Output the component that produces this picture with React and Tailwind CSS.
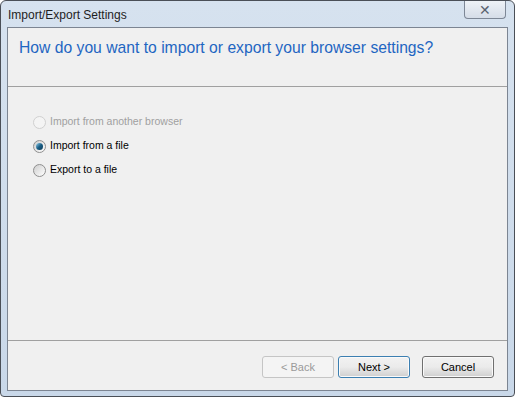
import { useState } from 'react'

function Radio({ checked, disabled, label, onClick }) {
  return (
    <button
      type="button"
      onClick={onClick}
      disabled={disabled}
      className={`flex items-center h-[24px] text-[10.5px] ${disabled ? 'text-[#a0a0a0]' : 'text-black'}`}
    >
      <span
        className={`w-[13px] h-[13px] rounded-full border flex items-center justify-center mr-[4px] ${
          disabled
            ? 'border-[#d0d0d0] bg-[#f4f4f4]'
            : 'border-[#8f8f8f] bg-gradient-to-br from-[#cfcfcf] to-[#ffffff]'
        }`}
      >
        {checked && (
          <span className="w-[7px] h-[7px] rounded-full bg-gradient-to-br from-[#8fd3f0] via-[#1a5f86] to-[#0d3b59]" />
        )}
      </span>
      {label}
    </button>
  )
}

function DlgButton({ children, disabled, isDefault }) {
  return (
    <button
      type="button"
      disabled={disabled}
      className={`w-[72px] h-[22px] rounded-[3px] border text-[11px] ${
        disabled
          ? 'border-[#c5c5c5] bg-[#f4f4f4] text-[#9a9a9a]'
          : isDefault
          ? 'border-[#3c7fb1] bg-gradient-to-b from-[#f2f2f2] via-[#ebebeb] to-[#cfcfcf] text-black shadow-[inset_0_0_0_1px_#fafafa]'
          : 'border-[#707070] bg-gradient-to-b from-[#f2f2f2] via-[#ebebeb] to-[#cfcfcf] text-black shadow-[inset_0_0_0_1px_#fafafa]'
      }`}
    >
      {children}
    </button>
  )
}

export default function App() {
  const [choice, setChoice] = useState('file')

  return (
    <div className="w-[515px] h-[397px] font-['Liberation_Sans',Arial,sans-serif]">
      <div className="w-[515px] h-[397px] flex flex-col rounded-t-[6px] rounded-b-[4px] border border-[#4a4f57] bg-gradient-to-b from-[#d6e2ef] to-[#c9d8e9]">
        {/* title bar */}
        <div className="h-[26px] flex items-start justify-between pl-[7px]">
          <span className="mt-[5px] text-[12px] text-[#1e1e1e]">Import/Export Settings</span>
          <div className="mr-[8px] w-[42px] h-[18px] rounded-b-[4px] border border-t-0 border-[#7d8796] bg-gradient-to-b from-[#eef2f7] to-[#d5dde8] flex items-center justify-center text-[#5a6270] text-[14px] leading-none">
            ✕
          </div>
        </div>

        {/* client area */}
        <div className="flex-1 mx-[6px] mb-[5px] flex flex-col border border-[#7c8592] bg-[#f0f0f0]">
          <div className="h-[58px] pl-[11px] pt-[8px] text-[15.7px] text-[#1f66c2]">
            How do you want to import or export your browser settings?
          </div>
          <div className="h-px bg-[#a0a0a0]" />

          <div className="flex-1 pl-[25px] pt-[23px] flex flex-col">
            <Radio disabled label="Import from another browser" />
            <Radio checked={choice === 'file'} label="Import from a file" onClick={() => setChoice('file')} />
            <Radio checked={choice === 'export'} label="Export to a file" onClick={() => setChoice('export')} />
          </div>

          <div className="h-px bg-[#a0a0a0]" />
          <div className="h-[49px] flex items-start justify-end pt-[15px] pr-[13px]">
            <DlgButton disabled>&lt; Back</DlgButton>
            <div className="w-[4px]" />
            <DlgButton isDefault>Next &gt;</DlgButton>
            <div className="w-[12px]" />
            <DlgButton>Cancel</DlgButton>
          </div>
        </div>
      </div>
    </div>
  )
}
